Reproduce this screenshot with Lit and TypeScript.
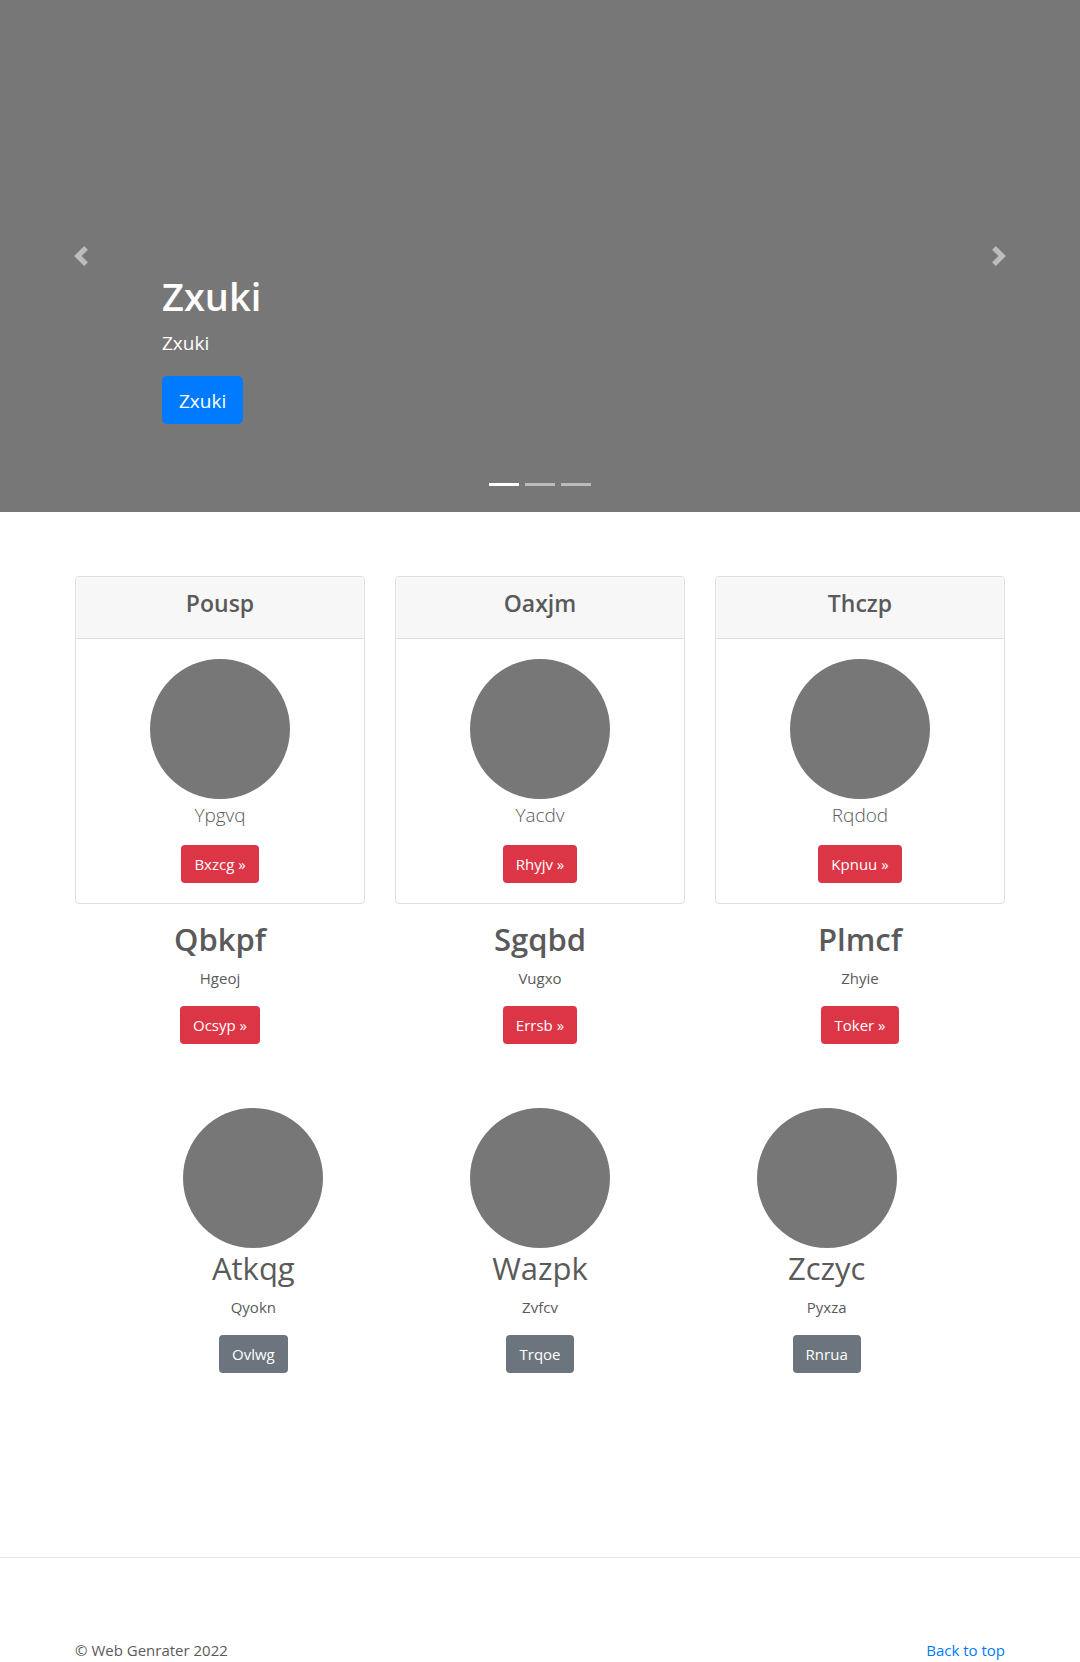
import { LitElement, html, css, svg } from "lit";
import { customElement, property, state } from "lit/decorators.js";
import { classMap } from "lit/directives/class-map.js";

interface Item {
  title: string;
  text: string;
  action: string;
}

const CARDS: Item[] = [
  { title: "Pousp", text: "Ypgvq", action: "Bxzcg »" },
  { title: "Oaxjm", text: "Yacdv", action: "Rhyjv »" },
  { title: "Thczp", text: "Rqdod", action: "Kpnuu »" },
];

const OFFERS: Item[] = [
  { title: "Qbkpf", text: "Hgeoj", action: "Ocsyp »" },
  { title: "Sgqbd", text: "Vugxo", action: "Errsb »" },
  { title: "Plmcf", text: "Zhyie", action: "Toker »" },
];

const PEOPLE: Item[] = [
  { title: "Atkqg", text: "Qyokn", action: "Ovlwg" },
  { title: "Wazpk", text: "Zvfcv", action: "Trqoe" },
  { title: "Zczyc", text: "Pyxza", action: "Rnrua" },
];

const shared = css`
  *,
  *::before,
  *::after {
    box-sizing: border-box;
  }
  h1,
  h2,
  h3,
  p {
    margin: 0;
  }
  .btn {
    display: inline-block;
    padding: 6px 12px;
    border: 1px solid transparent;
    border-radius: 4px;
    color: #fff;
    font-size: 15px;
    line-height: 24px;
    text-decoration: none;
  }
  .btn.primary {
    padding: 9px 16px 7px;
    border-radius: 5px;
    background: #007bff;
    font-size: 19px;
    line-height: 30px;
  }
  .btn.danger {
    background: #dc3545;
  }
  .btn.secondary {
    background: #6c757d;
  }
`;

@customElement("hero-carousel")
export class HeroCarousel extends LitElement {
  static styles = [
    shared,
    css`
      :host {
        display: block;
      }
      .carousel {
        position: relative;
        display: flex;
        flex-direction: column;
        justify-content: flex-end;
        min-height: 512px;
        padding: 0 15% 88px;
        background: #777;
        color: #fff;
      }
      .title {
        margin-bottom: 8px;
        font-size: 38px;
        font-weight: 600;
        line-height: 48px;
      }
      .lead {
        margin-bottom: 18px;
        font-size: 19px;
        line-height: 30px;
      }
      .control {
        position: absolute;
        top: 0;
        bottom: 0;
        display: flex;
        align-items: center;
        justify-content: center;
        width: 15%;
        padding: 0;
        border: 0;
        background: none;
        color: #fff;
        opacity: 0.5;
        cursor: pointer;
      }
      .prev {
        left: 0;
      }
      .next {
        right: 0;
      }
      .icon {
        width: 20px;
        height: 20px;
        fill: currentColor;
      }
      .indicators {
        position: absolute;
        right: 0;
        bottom: 16px;
        left: 0;
        display: flex;
        justify-content: center;
        gap: 6px;
      }
      .indicator {
        width: 30px;
        height: 23px;
        padding: 0;
        border: 0 solid transparent;
        border-width: 10px 0;
        background: #fff;
        background-clip: padding-box;
        opacity: 0.5;
        cursor: pointer;
      }
      .indicator.active {
        opacity: 1;
      }
    `,
  ];

  @state() private active = 0;

  private step(by: number) {
    this.active = (this.active + by + 3) % 3;
  }

  private arrow(d: string) {
    return html`<svg class="icon" viewBox="0 0 8 8" aria-hidden="true">${svg`<path d=${d}></path>`}</svg>`;
  }

  render() {
    return html`
      <section class="carousel">
        <h1 class="title">Zxuki</h1>
        <p class="lead">Zxuki</p>
        <div><a class="btn primary" href="#">Zxuki</a></div>
        <button class="control prev" aria-label="Previous" @click=${() => this.step(-1)}>
          ${this.arrow("M5.25 0l-4 4 4 4 1.5-1.5L4.25 4l2.5-2.5L5.25 0z")}
        </button>
        <button class="control next" aria-label="Next" @click=${() => this.step(1)}>
          ${this.arrow("M2.75 0l-1.5 1.5L3.75 4l-2.5 2.5L2.75 8l4-4-4-4z")}
        </button>
        <div class="indicators">
          ${[0, 1, 2].map(
            (i) => html`<button
              class=${classMap({ indicator: true, active: i === this.active })}
              aria-label="Slide ${i + 1}"
              @click=${() => (this.active = i)}
            ></button>`
          )}
        </div>
      </section>
    `;
  }
}

@customElement("feature-card")
export class FeatureCard extends LitElement {
  static styles = [
    shared,
    css`
      :host {
        display: block;
      }
      .card {
        overflow: hidden;
        border: 1px solid #dfdfdf;
        border-radius: 4px;
        background: #fff;
      }
      .header {
        padding: 12px 20px 20px;
        border-bottom: 1px solid #dfdfdf;
        background: #f7f7f7;
      }
      .title {
        font-size: 23px;
        font-weight: 600;
        line-height: 29px;
      }
      .body {
        padding: 20px;
      }
      .circle {
        width: 140px;
        height: 140px;
        margin: 0 auto;
        border-radius: 50%;
        background: #777;
      }
      .lead {
        margin-bottom: 14px;
        font-size: 19px;
        font-weight: 300;
        line-height: 32px;
      }
    `,
  ];

  @property({ attribute: false }) item!: Item;

  render() {
    return html`
      <article class="card">
        <div class="header"><h3 class="title">${this.item.title}</h3></div>
        <div class="body">
          <div class="circle"></div>
          <p class="lead">${this.item.text}</p>
          <a class="btn danger" href="#">${this.item.action}</a>
        </div>
      </article>
    `;
  }
}

@customElement("text-block")
export class TextBlock extends LitElement {
  static styles = [
    shared,
    css`
      :host {
        display: block;
      }
      .circle {
        width: 140px;
        height: 140px;
        margin: 0 auto;
        border-radius: 50%;
        background: #777;
      }
      .title {
        margin-bottom: 6px;
        font-size: 31px;
        font-weight: 600;
        line-height: 41px;
      }
      .title.light {
        font-weight: 400;
      }
      .text {
        margin-bottom: 16px;
        font-size: 15px;
        line-height: 24px;
      }
    `,
  ];

  @property({ attribute: false }) item!: Item;
  @property({ type: Boolean }) portrait = false;

  render() {
    return html`
      ${this.portrait ? html`<div class="circle"></div>` : null}
      <h2 class=${classMap({ title: true, light: this.portrait })}>${this.item.title}</h2>
      <p class="text">${this.item.text}</p>
      <a class=${classMap({ btn: true, secondary: this.portrait, danger: !this.portrait })} href="#"
        >${this.item.action}</a
      >
    `;
  }
}

@customElement("app-root")
export class AppRoot extends LitElement {
  static styles = css`
    :host {
      display: block;
      background: #fff;
      color: #5a5a5a;
      font-family: "Segoe UI", "Open Sans", "Noto Sans", sans-serif;
      font-size: 15px;
      line-height: 24px;
    }
    .container {
      box-sizing: border-box;
      max-width: 960px;
      margin: 0 auto;
      padding: 0 15px;
    }
    .marketing {
      padding-top: 64px;
      padding-bottom: 184px;
      text-align: center;
    }
    .row {
      display: grid;
      grid-template-columns: repeat(3, 1fr);
      column-gap: 30px;
    }
    .offers {
      margin-top: 15px;
    }
    .people {
      margin-top: 64px;
      padding: 0 35px;
      column-gap: 0;
    }
    .divider {
      margin: 0 0 80px;
      border: 0;
      border-top: 1px solid rgba(0, 0, 0, 0.1);
    }
    .footer {
      display: flex;
      justify-content: space-between;
    }
    .copyright {
      margin: 0;
    }
    .top {
      color: #007bff;
      text-decoration: none;
    }
  `;

  render() {
    return html`
      <hero-carousel></hero-carousel>
      <main class="container marketing">
        <div class="row">${CARDS.map((c) => html`<feature-card .item=${c}></feature-card>`)}</div>
        <div class="row offers">${OFFERS.map((c) => html`<text-block .item=${c}></text-block>`)}</div>
        <div class="row people">
          ${PEOPLE.map((c) => html`<text-block portrait .item=${c}></text-block>`)}
        </div>
      </main>
      <hr class="divider" />
      <footer class="container footer">
        <p class="copyright">© Web Genrater 2022</p>
        <a class="top" href="#">Back to top</a>
      </footer>
    `;
  }
}
